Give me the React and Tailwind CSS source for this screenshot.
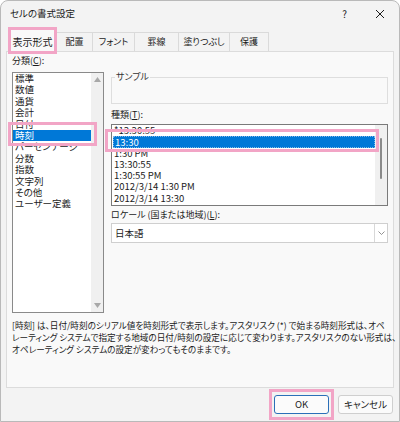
const CATEGORIES = ['標準', '数値', '通貨', '会計', '日付', '時刻', 'パーセンテージ', '分数', '指数', '文字列', 'その他', 'ユーザー定義'];
const TYPES = ['*13:30:55', '13:30', '1:30 PM', '13:30:55', '1:30:55 PM', '2012/3/14 1:30 PM', '2012/3/14 13:30'];
const TABS = [
  { label: '配置', w: 'w-[36px]' },
  { label: 'フォント', w: 'w-[42px]' },
  { label: '罫線', w: 'w-[44px]' },
  { label: '塗りつぶし', w: 'w-[51px]' },
  { label: '保護', w: 'w-[39px]' },
];

export default function App() {
  return (
    <div className="relative flex h-[422px] w-[400px] flex-col overflow-hidden rounded-t-[8px] border border-[#b9b9b9] bg-[#f3f3f3] font-['Noto_Sans_CJK_JP',sans-serif] text-[9px] text-[#1b1b1b] [font-feature-settings:'palt']">
      {/* title bar */}
      <div className="flex h-[25px] items-center pl-[9px] pr-[12px]">
        <span className="flex-1 text-[9.5px]">セルの書式設定</span>
        <span className="mr-[28px] text-[10px]">?</span>
        <svg width="10" height="10" viewBox="0 0 10 10" className="mr-[2px]">
          <path d="M1 1 L9 9 M9 1 L1 9" stroke="#1b1b1b" strokeWidth="1" />
        </svg>
      </div>

      {/* tabs */}
      <div className="relative z-10 ml-[7px] mt-[1px] flex h-[24px] items-end">
        <div className="-mb-[3px] flex h-[27px] w-[49px] items-center justify-center border-[3px] border-[#f2a5c6] bg-[#f9f9f9] pt-[1px] text-[10px]">
          表示形式
        </div>
        {TABS.map((t) => (
          <div
            key={t.label}
            className={`${t.w} flex h-[19px] items-center justify-center border border-b-0 border-l-0 border-[#dadada] bg-[#f3f3f3]`}
          >
            {t.label}
          </div>
        ))}
      </div>

      {/* panel */}
      <div className="mx-[5px] flex h-[337px] flex-col border border-[#dcdcdc] bg-[#f9f9f9] px-[5px] pt-[3px]">
        <div className="flex">
          {/* left column */}
          <div className="w-[92px]">
            <div className="h-[12px] leading-[12px]">
              分類(<span className="underline">C</span>):
            </div>
            <div className="mt-[5px] flex h-[241px] border border-[#8a8a8a] bg-white">
              <div className="flex-1">
                {CATEGORIES.map((c) => (
                  <div
                    key={c}
                    className={`h-[11.4px] pl-[2px] text-[9.5px] leading-[11.4px] ${c === '時刻' ? 'bg-[#0078d7] text-white' : ''}`}
                  >
                    {c}
                  </div>
                ))}
              </div>
              <div className="flex w-[12px] flex-col items-center justify-between bg-[#f0f0f0] py-[4px]">
                <svg width="7" height="5" viewBox="0 0 7 5">
                  <path d="M0 5 L3.5 0 L7 5 Z" fill="#a8a8a8" />
                </svg>
                <svg width="7" height="5" viewBox="0 0 7 5">
                  <path d="M0 0 L3.5 5 L7 0 Z" fill="#a8a8a8" />
                </svg>
              </div>
            </div>
          </div>

          {/* right column */}
          <div className="ml-[7px] flex-1">
            <fieldset className="mt-[16px] h-[33px] border border-[#dedede] px-[3px]">
              <legend className="px-[1px] leading-[12px] text-[#333]">サンプル</legend>
            </fieldset>
            <div className="mt-[5px] h-[12px] leading-[12px]">
              種類(<span className="underline">T</span>):
            </div>
            <div className="mt-[3px] flex h-[82px] border border-[#7a7a7a] bg-white">
              <div className="flex-1 overflow-hidden pl-[1px]">
                {TYPES.map((t, i) => (
                  <div
                    key={i}
                    className={`h-[11.3px] pl-[1px] text-[9.5px] leading-[11.3px] ${i === 1 ? 'border border-dotted border-[#7fb6e8] bg-[#0078d7] text-white' : ''}`}
                  >
                    {t}
                  </div>
                ))}
              </div>
              <div className="relative w-[12px] bg-[#f0f0f0]">
                <div className="absolute left-[5px] top-[13px] h-[41px] w-[2px] rounded-full bg-[#8a8a8a]" />
              </div>
            </div>
            <div className="mt-[3px] h-[12px] leading-[12px]">
              ロケール (国または地域)(<span className="underline">L</span>):
            </div>
            <div className="mt-[2px] flex h-[20px] items-center border border-[#cfcfcf] bg-white">
              <span className="flex-1 pl-[3px] text-[9.5px]">日本語</span>
              <div className="flex h-full w-[13px] items-center justify-center border-l border-[#d8d8d8]">
                <svg width="7" height="4" viewBox="0 0 7 4">
                  <path d="M0.5 0.5 L3.5 3.5 L6.5 0.5" fill="none" stroke="#777" strokeWidth="0.8" />
                </svg>
              </div>
            </div>
          </div>
        </div>

        <p className="mt-[6px] whitespace-nowrap text-[8.6px] leading-[12px]">
          [時刻] は、日付/時刻のシリアル値を時刻形式で表示します。アスタリスク (*) で始まる時刻形式は、オペ
          <br />
          レーティング システムで指定する地域の日付/時刻の設定に応じて変わります。アスタリスクのない形式は、
          <br />
          オペレーティング システムの設定が変わってもそのままです。
        </p>
      </div>

      {/* footer */}
      <div className="mr-[6px] mt-[1px] flex items-center justify-end gap-[4px]">
        <div className="border-[3px] border-[#f2a5c6] px-[2px] py-[3px]">
          <button className="flex h-[19px] w-[55px] items-center justify-center rounded-[3px] border border-[#2b6fb8] bg-[#fbfbfb] text-[9.5px]">
            OK
          </button>
        </div>
        <button className="flex h-[19px] w-[55px] items-center justify-center rounded-[3px] border border-[#cfcfcf] bg-[#fbfbfb] text-[9.5px]">
          キャンセル
        </button>
      </div>

      {/* annotation highlights */}
      <div className="pointer-events-none absolute left-[7px] top-[121px] h-[24px] w-[89px] border-[3px] border-[#f2a5c6]" />
      <div className="pointer-events-none absolute left-[104px] top-[128px] h-[23px] w-[274px] border-[3px] border-[#f2a5c6]" />
    </div>
  );
}
